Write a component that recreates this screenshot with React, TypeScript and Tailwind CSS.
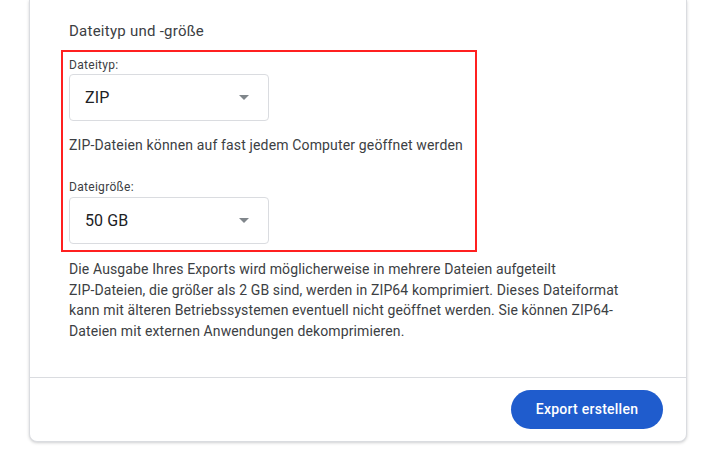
import React from "react";

function Select({ value }: { value: string }) {
  return (
    <div className="flex h-[47px] w-[200px] items-center justify-between rounded-[4px] border border-[#dadce0] bg-white pl-[15px] pr-[19px]">
      <span className="text-[16px] tracking-[0.1px] text-[#202124]">{value}</span>
      <svg width="10" height="5" viewBox="0 0 10 5" className="block">
        <path d="M0 0 L10 0 L5 5 Z" fill="#80868b" />
      </svg>
    </div>
  );
}

export default function App() {
  return (
    <div className="min-h-[449px] w-[713px] bg-white font-['Roboto',sans-serif]">
      <div className="ml-[29px] w-[658px] rounded-b-[8px] border-x border-b border-[#dadce0] bg-white shadow-[0_1px_3px_rgba(60,64,67,0.25)]">
        <div className="pl-[39px] pt-[21px]">
          <div className="text-[15px] leading-[20px] tracking-[0.25px] text-[#3c4043]">Dateityp und -größe</div>
          <div className="ml-[-8px] mt-[9px] w-[416px] border-2 border-[#ff2020] pb-[6px] pl-[6px] pt-[5px]">
            <div className="text-[12px] leading-[16px] tracking-[0.3px] text-[#3c4043]">Dateityp:</div>
            <div className="mt-[1px]">
              <Select value="ZIP" />
            </div>
            <div className="mt-[14px] text-[14px] leading-[20px] tracking-[0.15px] text-[#3c4043]">
              ZIP-Dateien können auf fast jedem Computer geöffnet werden
            </div>
            <div className="mt-[24px] text-[12px] leading-[16px] tracking-[0.3px] text-[#3c4043]">Dateigröße:</div>
            <div className="mt-[2px]">
              <Select value="50 GB" />
            </div>
          </div>
          <p className="mt-[7px] text-[14px] leading-[20.5px] tracking-[0.12px] text-[#3c4043]">
            Die Ausgabe Ihres Exports wird möglicherweise in mehrere Dateien aufgeteilt
            <br />
            ZIP-Dateien, die größer als 2 GB sind, werden in ZIP64 komprimiert. Dieses Dateiformat
            <br />
            kann mit älteren Betriebssystemen eventuell nicht geöffnet werden. Sie können ZIP64-
            <br />
            Dateien mit externen Anwendungen dekomprimieren.
          </p>
        </div>
        <div className="mt-[36px] border-t border-[#dadce0]" />
        <div className="flex justify-end pb-[12px] pr-[23px] pt-[12px]">
          <button className="flex h-[39px] w-[152px] items-center justify-center rounded-full bg-[#1f5ccd] text-[14px] font-medium tracking-[0.25px] text-white">
            Export erstellen
          </button>
        </div>
      </div>
    </div>
  );
}
